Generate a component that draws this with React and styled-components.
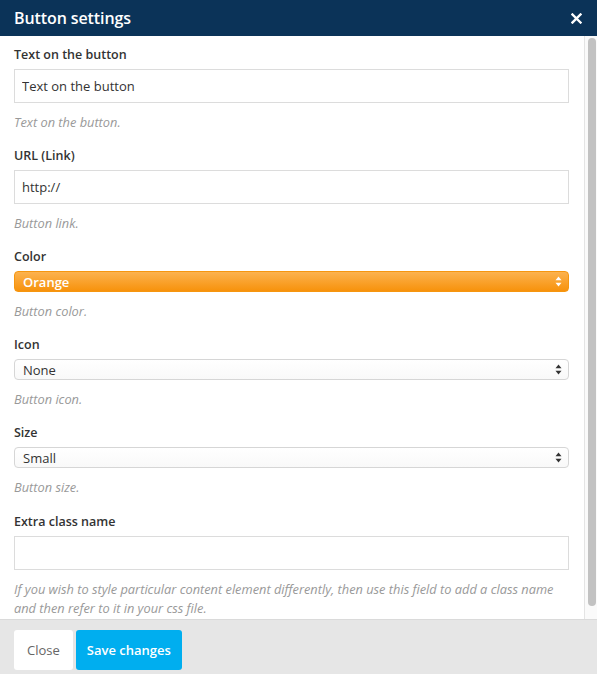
import React from "react"
import styled, { createGlobalStyle } from "styled-components"

const Global = createGlobalStyle`
    html, body {
        margin: 0;
        padding: 0;
        background: #fff;
    }
    * {
        box-sizing: border-box;
    }
`

const fields = [
    { label: 'Text on the button', type: 'text', value: 'Text on the button', hint: 'Text on the button.' },
    { label: 'URL (Link)', type: 'text', value: 'http://', hint: 'Button link.' },
    { label: 'Color', type: 'select', value: 'Orange', hint: 'Button color.', orange: true },
    { label: 'Icon', type: 'select', value: 'None', hint: 'Button icon.' },
    { label: 'Size', type: 'select', value: 'Small', hint: 'Button size.' },
    { label: 'Extra class name', type: 'text', value: '', hint: 'If you wish to style particular content element differently, then use this field to add a class name and then refer to it in your css file.' },
]

function Arrows({ color }) {
    return (
        <svg width="7" height="11" viewBox="0 0 7 11">
            <path d="M3.5 0.5 L6.5 4.2 L0.5 4.2 Z" fill={color} />
            <path d="M3.5 10.5 L6.5 6.8 L0.5 6.8 Z" fill={color} />
        </svg>
    )
}

export default function App() {
    return (
        <Modal>
            <Global />
            <Header>
                <h2>Button settings</h2>
                <CloseIcon aria-label="close">
                    <svg width="11" height="11" viewBox="0 0 11 11">
                        <path d="M1.5 1.5 L9.5 9.5 M9.5 1.5 L1.5 9.5" stroke="#fff" strokeWidth="2.4" strokeLinecap="square" />
                    </svg>
                </CloseIcon>
            </Header>
            <Body>
                <Content>
                    {fields.map(f => (
                        <Field key={f.label}>
                            <Label>{f.label}</Label>
                            {f.type === 'text' ? (
                                <TextInput defaultValue={f.value} />
                            ) : (
                                <SelectBox orange={f.orange}>
                                    <span>{f.value}</span>
                                    <Arrows color={f.orange ? '#fff' : '#333'} />
                                </SelectBox>
                            )}
                            <Hint>{f.hint}</Hint>
                        </Field>
                    ))}
                </Content>
                <ScrollTrack>
                    <ScrollThumb />
                </ScrollTrack>
            </Body>
            <Footer>
                <Button>Close</Button>
                <Button primary>Save changes</Button>
            </Footer>
        </Modal>
    )
}

const Modal = styled.div`
    width: 597px;
    height: 674px;
    display: flex;
    flex-direction: column;
    font-family: "Open Sans", "Liberation Sans", sans-serif;
    color: #333;
    background: #fff;
`

const Header = styled.div`
    height: 36px;
    flex-shrink: 0;
    background-color: #0b3358;
    display: flex;
    align-items: center;
    justify-content: space-between;
    padding: 0 15px 0 14px;

    h2 {
        margin: 0;
        color: #fff;
        font-size: 16px;
        font-weight: 600;
        letter-spacing: -0.1px;
    }
`

const CloseIcon = styled.button`
    border: unset;
    background: none;
    padding: 0;
    display: flex;
    cursor: pointer;
    margin-top: 1px;
`

const Body = styled.div`
    flex: 1;
    min-height: 0;
    display: flex;
    overflow: hidden;
`

const Content = styled.div`
    flex: 1;
    padding: 10px 15px 0 14px;
`

const ScrollTrack = styled.div`
    width: 13px;
    flex-shrink: 0;
    background: #fafafa;
    border-left: 1px solid #e4e4e4;
    padding: 2px 1px 0 3px;
`

const ScrollThumb = styled.div`
    height: 568px;
    background-color: #c2c2c2;
    border-radius: 4px;
`

const Field = styled.div`
    display: flex;
    flex-direction: column;
    margin-bottom: 15px;

    &:nth-child(5) {
        margin-bottom: 16px;
    }

    &:last-child {
        margin-bottom: 0;
    }
`

const Label = styled.label`
    font-size: 12.5px;
    font-weight: 600;
    line-height: 18px;
    margin-bottom: 5px;
    color: #333;
`

const TextInput = styled.input`
    height: 34px;
    width: 100%;
    border: 1px solid #dcdcdc;
    border-radius: 0;
    padding: 0 7px;
    font-family: inherit;
    font-size: 13px;
    color: #333;
    outline: none;
`

const SelectBox = styled.div`
    height: 21px;
    display: flex;
    align-items: center;
    justify-content: space-between;
    padding: 0 6px 0 8px;
    border-radius: 4px;
    font-size: 13px;
    border: 1px solid ${props => props.orange ? '#f6960f' : '#d6d6d6'};
    color: ${props => props.orange ? '#fff' : '#333'};
    font-weight: ${props => props.orange ? 600 : 400};
    background: ${props => props.orange
        ? 'linear-gradient(to bottom, #fcb24e, #f7920c)'
        : 'linear-gradient(to bottom, #ffffff, #f9f9f9)'};
`

const Hint = styled.p`
    margin: 10px 0 0;
    font-size: 12.8px;
    font-style: italic;
    line-height: 19px;
    color: #999;
`

const Footer = styled.div`
    height: 55px;
    flex-shrink: 0;
    background-color: #e6e6e6;
    border-top: 1px solid #dadada;
    display: flex;
    align-items: flex-start;
    gap: 3px;
    padding: 10px 14px 0;
`

const Button = styled.button`
    height: 40px;
    border: unset;
    border-radius: 3px;
    padding: 0 ${props => props.primary ? '11px' : '13px'};
    font-family: inherit;
    font-size: 13px;
    font-weight: ${props => props.primary ? 600 : 400};
    background-color: ${props => props.primary ? '#00aeef' : '#fff'};
    color: ${props => props.primary ? '#fff' : '#666'};
    cursor: pointer;
`
